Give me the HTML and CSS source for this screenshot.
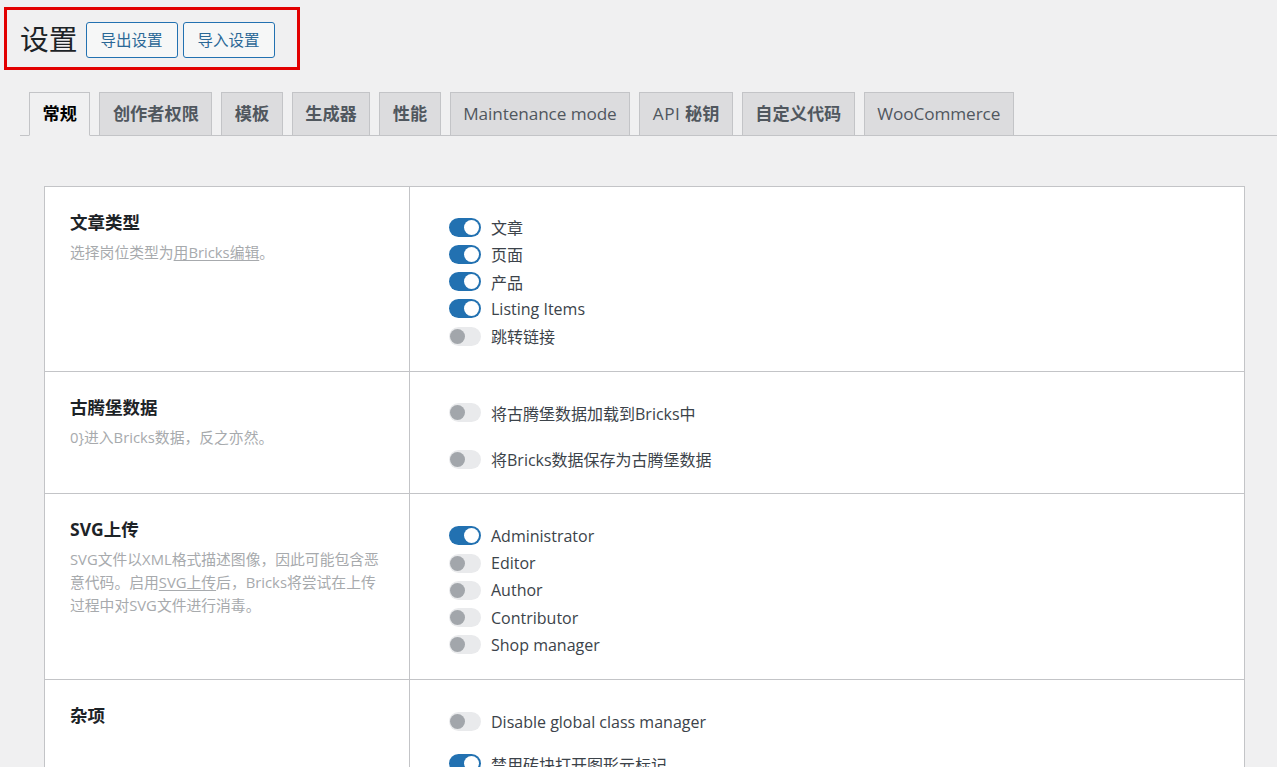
FILE: index.html
```html
<!DOCTYPE html>
<html lang="zh-CN">
<head>
<meta charset="utf-8">
<title>设置</title>
<link rel="stylesheet" href="styles.css">
</head>
<body>
<div class="header">
  <h1 class="page-title">设置</h1>
  <button class="btn">导出设置</button>
  <button class="btn">导入设置</button>
</div>

<nav class="tabs">
  <a class="tab active">常规</a>
  <a class="tab">创作者权限</a>
  <a class="tab">模板</a>
  <a class="tab">生成器</a>
  <a class="tab">性能</a>
  <a class="tab"><span class="lat">Maintenance mode</span></a>
  <a class="tab"><span class="lat lat-wide">API</span> 秘钥</a>
  <a class="tab">自定义代码</a>
  <a class="tab"><span class="lat">WooCommerce</span></a>
</nav>

<div class="panel">
  <div class="row">
    <div class="label-cell">
      <div class="title">文章类型</div>
      <div class="desc">选择岗位类型为<u>用Bricks编辑</u>。</div>
    </div>
    <div class="opts">
      <div class="opt"><span class="tg on"></span><span>文章</span></div>
      <div class="opt"><span class="tg on"></span><span>页面</span></div>
      <div class="opt"><span class="tg on"></span><span>产品</span></div>
      <div class="opt"><span class="tg on"></span><span>Listing Items</span></div>
      <div class="opt"><span class="tg"></span><span>跳转链接</span></div>
    </div>
  </div>

  <div class="row">
    <div class="label-cell">
      <div class="title">古腾堡数据</div>
      <div class="desc">0}进入Bricks数据，反之亦然。</div>
    </div>
    <div class="opts opts-gutenberg">
      <div class="opt"><span class="tg"></span><span>将古腾堡数据加载到Bricks中</span></div>
      <div class="opt"><span class="tg"></span><span>将Bricks数据保存为古腾堡数据</span></div>
    </div>
  </div>

  <div class="row">
    <div class="label-cell">
      <div class="title">SVG上传</div>
      <div class="desc">SVG文件以XML格式描述图像，因此可能包含恶意代码。启用<u>SVG上传</u>后，Bricks将尝试在上传过程中对SVG文件进行消毒。</div>
    </div>
    <div class="opts opts-svg">
      <div class="opt"><span class="tg on"></span><span>Administrator</span></div>
      <div class="opt"><span class="tg"></span><span>Editor</span></div>
      <div class="opt"><span class="tg"></span><span>Author</span></div>
      <div class="opt"><span class="tg"></span><span>Contributor</span></div>
      <div class="opt"><span class="tg"></span><span>Shop manager</span></div>
    </div>
  </div>

  <div class="row last">
    <div class="label-cell">
      <div class="title">杂项</div>
    </div>
    <div class="opts opts-misc">
      <div class="opt"><span class="tg"></span><span>Disable global class manager</span></div>
      <div class="opt"><span class="tg on"></span><span>禁用砖块打开图形元标记</span></div>
      <div class="opt"><span class="tg"></span><span>禁用 SEO 元标记</span></div>
    </div>
  </div>
</div>
</body>
</html>
```

FILE: styles.css
```css
* { box-sizing: border-box; }

body {
  margin: 0;
  background: #f0f0f1;
  font-family: "Open Sans", "Noto Sans CJK SC", sans-serif;
  color: #3c434a;
}

.header {
  display: inline-flex;
  align-items: center;
  margin: 7px 0 0 4px;
  border: 3px solid #e20000;
  height: 63px;
  padding: 2px 22px 0 13px;
}

.page-title {
  margin: 0 8px 0 0;
  font-size: 28.75px;
  font-weight: 400;
  line-height: 1;
  color: #1d2327;
}

.btn {
  height: 36px;
  padding: 0 14px;
  border: 1px solid #2271b1;
  border-radius: 3px;
  background: #f6f7f7;
  color: #2a6896;
  font-family: inherit;
  font-size: 15.5px;
}

.btn + .btn { margin-left: 5px; }

.tabs {
  display: flex;
  gap: 9px;
  margin: 22px 0 0 20px;
  padding-left: 9px;
  border-bottom: 1px solid #c3c4c7;
}

.tab {
  display: block;
  margin-bottom: -1px;
  padding: 6px 12.5px;
  border: 1px solid #c3c4c7;
  background: #dcdcde;
  color: #50575e;
  font-size: 17.2px;
  font-weight: 600;
  line-height: 30px;
  white-space: nowrap;
}

.tab .lat { font-weight: 400; letter-spacing: -0.1px; }
.tab .lat-wide { letter-spacing: 0.6px; }

.tab.active {
  background: #f0f0f1;
  border-bottom-color: #f0f0f1;
  color: #000;
}

.panel {
  margin: 50px 32px 0 44px;
  background: #fff;
  border: 1px solid #c3c4c7;
}

.row {
  display: grid;
  grid-template-columns: 365px 1fr;
  border-bottom: 1px solid #c3c4c7;
}

.row.last { border-bottom: 0; }

.label-cell {
  padding: 23px 28px 20px 25px;
  border-right: 1px solid #c3c4c7;
}

.title {
  font-size: 17.5px;
  font-weight: 700;
  line-height: 24px;
  color: #1d2327;
}

.desc {
  margin-top: 7px;
  font-size: 14.8px;
  line-height: 23px;
  color: #a7aaad;
}

.desc u { text-decoration-thickness: 1px; text-underline-offset: 2px; }

.opts {
  display: flex;
  flex-direction: column;
  padding: 26.5px 0 21px 39px;
}

.opts-gutenberg { gap: 19px; padding-top: 27.5px; padding-bottom: 20px; }
.opts-svg { padding-top: 28.5px; padding-bottom: 20px; }
.opts-misc { gap: 15px; padding-top: 28.5px; }

.opt {
  display: flex;
  align-items: center;
  gap: 10px;
  height: 27.25px;
  font-size: 16px;
  color: #3c434a;
}

.tg {
  position: relative;
  flex: none;
  width: 32px;
  height: 19px;
  border-radius: 10px;
  background: #e9eaec;
}

.tg::after {
  content: "";
  position: absolute;
  top: 2px;
  left: 1px;
  width: 15px;
  height: 15px;
  border-radius: 50%;
  background: #a2a6ab;
}

.tg.on { background: #2271b1; }

.tg.on::after {
  left: auto;
  right: 2px;
  background: #fff;
}
```
